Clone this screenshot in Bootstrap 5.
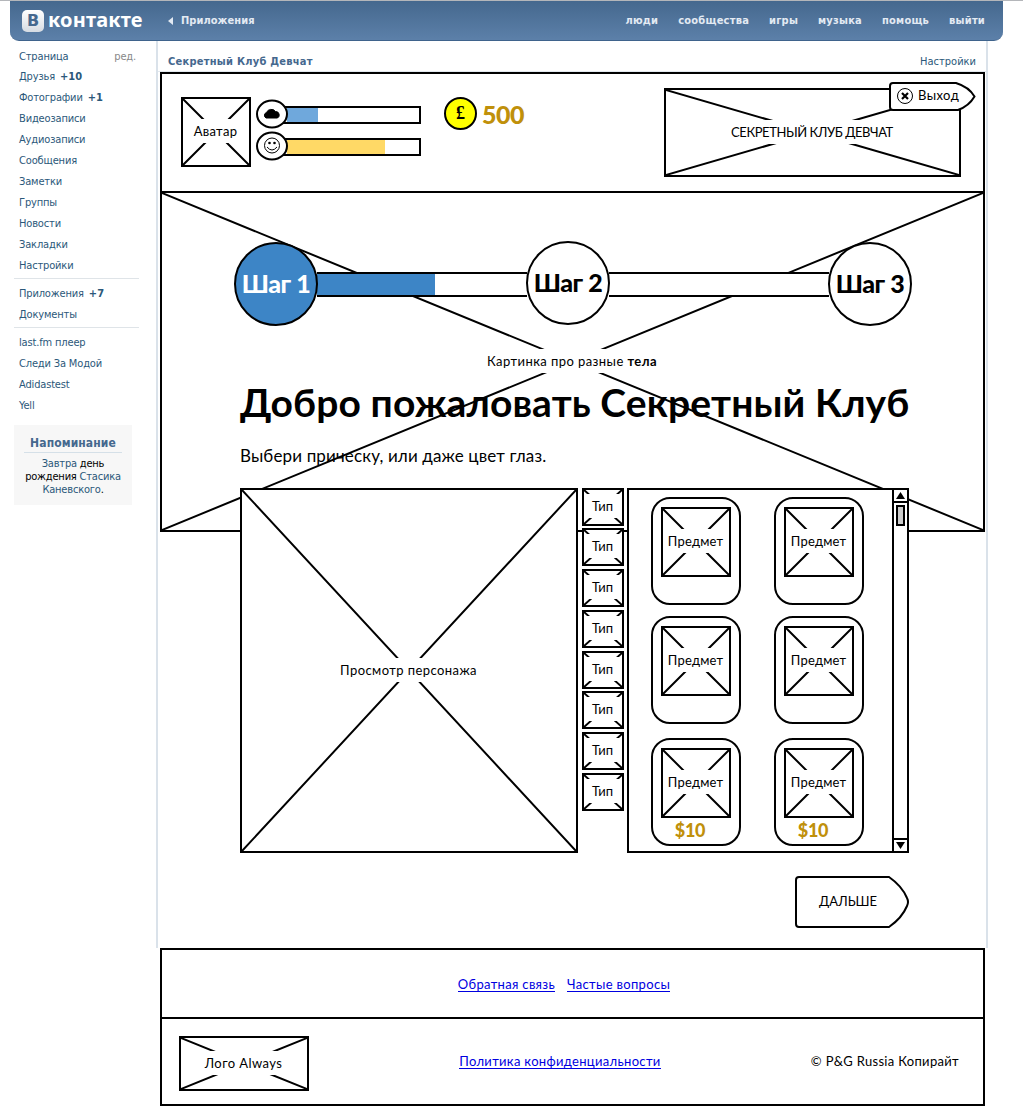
<!DOCTYPE html>
<html lang="ru">
<head>
<meta charset="utf-8">
<title>Секретный Клуб Девчат</title>
<link href="https://cdn.jsdelivr.net/npm/bootstrap@5.3.0/dist/css/bootstrap.min.css" rel="stylesheet">
<style>
body{width:1023px;height:1106px;overflow:hidden;background:#fff;border-top:1px solid #b4b6ba;font-family:"DejaVu Sans Condensed","DejaVu Sans",sans-serif;font-stretch:condensed;font-size:11px;line-height:13px;color:#000}
a{text-decoration:none;color:#2b587a}
.vk-top{height:40px;width:993px;margin-left:10px;padding:0 18px 0 12px;background:linear-gradient(#45688e,#5c80a9);border-bottom:1px solid #3f638c;border-radius:0 0 9px 9px}
.vk-top a{color:#e3eaf3;font-weight:700;letter-spacing:.05px}
.vk-top nav{gap:20px}
.vk-top nav a{letter-spacing:.22px}
.vk-logo{width:22px;height:22px;border-radius:5px;background:linear-gradient(#fff,#d5dbe2);color:#45688e;font:bold 16px/22px "DejaVu Sans",sans-serif;text-align:center}
.vk-word{font:bold 20px/24px "Noto Sans",sans-serif;color:#fff;letter-spacing:.15px;margin-left:4px;width:120px;position:relative;top:-1px}
.vk-side{width:146px;margin-left:10px;padding:5px 17px 0 4px}
.vk-side .item{height:21px;line-height:21px;padding-left:5px;white-space:nowrap;letter-spacing:-.16px;color:#2b587a}
.vk-side .item.own{height:20px;padding-right:3px}
.vk-side .edit{color:#888}
.vk-side .item b{margin-left:2px;letter-spacing:.1px}
.vk-side .rule{height:1px;background:#dfe4e8;margin:2px 0 4px}
.vk-note{width:118px;height:80px;background:#f7f7f7;text-align:center;padding:10px 8px;margin-top:9px;letter-spacing:-.2px}
.vk-note h6{font-size:12px;line-height:17px;font-weight:700;color:#45688e;margin:0 2px 4px;border-bottom:1px solid #d5e0e8;letter-spacing:.1px}
.vk-main{width:832px;height:907px;border:solid #dae2ea;border-width:0 2px}
.app{margin-left:2px;width:825px}
.vk-title{height:31px;padding:10px 10px 0;border-bottom:1px solid #e2e8ee}
.vk-title b{color:#45688e;letter-spacing:.25px}
.wf{font-family:Lato,"Open Sans",sans-serif;font-size:13px;line-height:16px;color:#000;font-stretch:normal}
.ph{position:relative;border:2px solid #000;background:#fff;display:flex;align-items:center;justify-content:center;white-space:nowrap}
.ph>svg{position:absolute;inset:0;width:100%;height:100%}
.ph>span{position:relative;width:100%;background:#fff;height:24px;line-height:24px;margin-top:-2px;text-align:center;padding-right:1px}
.ls-wide{letter-spacing:.43px}
.ls-mid{letter-spacing:.32px}
.ls-tight{letter-spacing:-.43px}
.panel{height:119px;border:2px solid #000;border-bottom:0;position:relative;padding:23px 22px 0 19px}
.avatar{width:70px;height:70px}
.meters{margin-left:5px;padding-top:2px}
.meter{position:relative;height:32px;width:165px;padding:7px 0 0 16px}
.meter .track{height:18px;border:2px solid #000;background:#fff}
.meter .fill{height:14px;margin-left:13px}
.fill.energy{background:#6fa8dc}
.fill.mood{background:#ffd966}
.meter svg{position:absolute;left:0;top:0}
.coin{width:33px;height:33px;margin-left:23px;border:2px solid #000;border-radius:50%;background:#ff0;font:bold 18px/29px "Liberation Serif",serif;text-align:center}
.gold{color:#c0900a;font-weight:900}
.sum{font-size:25px;line-height:35px;margin-left:5px;letter-spacing:-.5px}
.banner{width:297px;height:89px;margin-top:-9px}
.exit{position:absolute;left:727px;top:8px;width:87px;height:29px}
.exit svg,.next svg{position:absolute;inset:0}
.exit span{position:absolute;left:29px;top:5px}
.stage{position:relative;height:757px}
.hero{position:absolute;left:0;top:0;width:825px;height:341px}
.inner{position:relative;padding-left:80px;width:749px}
.steps{margin-left:-6px;width:678px;padding-top:51px;height:135px}
.circ{position:relative;width:84px;height:84px;border:2px solid #000;border-radius:50%;background:#fff;font:900 25px/79px Lato,"Open Sans",sans-serif;letter-spacing:-.4px;text-align:center;white-space:nowrap;flex:none}
.circ.on{background:#3d85c6;color:#fff}
.circ.mid{top:-1px}
.bar{height:25px;border:solid #000;border-width:2px 0;background:#fff;margin:0 -1px}
.bar.b1{width:210px}
.bar.b2{width:220px}
.bar div{height:21px;background:#3d85c6}
.inner h1{font-size:39px;line-height:50px;font-weight:700;letter-spacing:.1px;margin:51px 0 0;white-space:nowrap}
.ask{font-size:17px;line-height:22px;height:22px;margin:18px 0 21px;white-space:nowrap;letter-spacing:.14px}
.preview{width:338px;height:365px}
.types{width:42px;margin:-.3px 0 0 4px;display:grid;grid-auto-rows:38px;row-gap:2.72px;height:323px}
.shop{width:282px;height:365px;border:2px solid #000;background:#fff;margin-left:3px}
.goods{width:213px;margin:7px 0 0 22px;display:grid;grid-template-columns:90px 90px;column-gap:33px;row-gap:11px;align-content:start}
.good{width:90px;height:108px;border:2px solid #000;border-radius:19px;padding:8px}
.good .ph{width:70px;height:70px}
.good .ph span{letter-spacing:.2px}
.good .gold{font-size:18px;line-height:24px;text-align:center;padding-right:12px;letter-spacing:-.3px}
.good.low{margin-top:3px}
.scroll{width:15px;border-left:2px solid #000}
.scroll .b{height:13px;border-bottom:2px solid #000;display:flex;align-items:center;justify-content:center}
.scroll .b.dn{border:0;border-top:2px solid #000}
.thumb{width:9px;height:21px;border:2px solid #000;background:#ccc;margin:2px auto 0}
.next{position:relative;width:114px;height:52px;margin:23px 0 0 555px;line-height:51px;padding-left:24px}
.foot{border:2px solid #000;height:158px}
.foot a{color:#0000e0;border-bottom:1px solid #0000e0;display:inline-block;line-height:14px;white-space:nowrap}
.f1{height:69px;border-bottom:2px solid #000;gap:12px;padding:2px 17px 0 0}
.f2{padding:17px 24px 0 17px}
.f2>a{position:relative;top:-2px}
.f2>span{position:relative;top:-3px}
.logo{width:130px;height:55px}
</style>
<script src="https://cdn.jsdelivr.net/npm/bootstrap@5.3.0/dist/js/bootstrap.bundle.min.js"></script>
</head>
<body>
<header class="vk-top d-flex align-items-center">
  <div class="vk-logo">В</div><div class="vk-word">контакте</div>
  <svg width="5" height="8" class="me-2"><path d="M5 0v8L0 4z" fill="#e3eaf3"/></svg><a href="#">Приложения</a>
  <nav class="ms-auto d-flex"><a href="#">люди</a><a href="#">сообщества</a><a href="#">игры</a><a href="#">музыка</a><a href="#">помощь</a><a href="#">выйти</a></nav>
</header>
<div class="d-flex">
  <aside class="vk-side">
    <div class="item own d-flex justify-content-between"><span>Страница</span><span class="edit">ред.</span></div>
    <div class="item">Друзья <b>+10</b></div><div class="item">Фотографии <b>+1</b></div><div class="item">Видеозаписи</div><div class="item">Аудиозаписи</div><div class="item">Сообщения</div><div class="item">Заметки</div><div class="item">Группы</div><div class="item">Новости</div><div class="item">Закладки</div><div class="item">Настройки</div>
    <div class="rule"></div>
    <div class="item">Приложения <b>+7</b></div><div class="item">Документы</div>
    <div class="rule"></div>
    <div class="item">last.fm плеер</div><div class="item">Следи За Модой</div><div class="item">Adidastest</div><div class="item">Yell</div>
    <div class="vk-note"><h6>Напоминание</h6><a href="#">Завтра</a> день<br>рождения <a href="#">Стасика<br>Каневского</a>.</div>
  </aside>
  <main class="vk-main">
    <div class="vk-title d-flex justify-content-between align-items-center"><b>Секретный Клуб Девчат</b><a href="#">Настройки</a></div>
    <div class="app wf">
      <section class="panel d-flex">
        <div class="ph avatar"><svg viewBox="0 0 66 66"><path d="M0 0L66 66M66 0L0 66" stroke="#000" stroke-width="2"/></svg><span class="ls-mid">Аватар</span></div>
        <div class="meters">
          <div class="meter"><div class="track"><div class="fill energy" style="width:31px"></div></div>
            <svg width="32" height="30"><ellipse cx="16" cy="15" rx="15" ry="13.5" fill="#fff" stroke="#000" stroke-width="2"/><path d="M10 19a3 3 0 0 1 .5-5.500a5 4.500 0 0 1 9-1a3.500 3.500 0 0 1 2 6.500z" stroke="#000"/></svg></div>
          <div class="meter"><div class="track"><div class="fill mood" style="width:98px"></div></div>
            <svg width="32" height="30"><ellipse cx="16" cy="15" rx="15" ry="13.5" fill="#fff" stroke="#000" stroke-width="2"/><g fill="none" stroke="#000"><circle cx="16" cy="14.500" r="7.500"/><path d="M11 16q5 6 10 0"/></g><circle cx="13.500" cy="12" r="1.300"/><circle cx="18.500" cy="12" r="1.300"/></svg></div>
        </div>
        <div class="coin">£</div><div class="gold sum">500</div>
        <div class="ph banner ms-auto"><svg viewBox="0 0 293 85" preserveAspectRatio="none"><path d="M0 0L293 85M293 0L0 85" stroke="#000" stroke-width="2"/></svg><span class="ls-tight">СЕКРЕТНЫЙ КЛУБ ДЕВЧАТ</span></div>
        <div class="exit"><svg width="87" height="29"><path d="M4 1H67Q80 5 85.500 14.500Q80 24 69 28H4Q1 28 1 25V4Q1 1 4 1Z" fill="#fff" stroke="#000" stroke-width="2"/><circle cx="16" cy="14" r="7.500" fill="none" stroke="#000"/><path d="M13 11l6 6m0-6l-6 6" stroke="#000" stroke-width="2.200"/></svg><span class="ls-wide">Выход</span></div>
      </section>
      <section class="stage">
        <div class="hero ph"><svg viewBox="0 0 821 337" preserveAspectRatio="none"><path d="M0 0L821 337M821 0L0 337" stroke="#000" stroke-width="2"/></svg><span class="ls-wide">Картинка про разные <b>тела</b></span></div>
        <div class="inner">
          <div class="steps d-flex align-items-center"><div class="circ on">Шаг 1</div><div class="bar b1"><div style="width:118px"></div></div><div class="circ mid">Шаг 2</div><div class="bar b2"></div><div class="circ">Шаг 3</div></div>
          <h1>Добро пожаловать Секретный Клуб</h1>
          <p class="ask">Выбери прическу, или даже цвет глаз.</p>
          <div class="d-flex">
            <div class="ph preview"><svg viewBox="0 0 334 361" preserveAspectRatio="none"><path d="M0 0L334 361M334 0L0 361" stroke="#000" stroke-width="2"/></svg><span class="ls-wide">Просмотр персонажа</span></div>
            <div class="types" id="types"></div>
            <div class="shop d-flex"><div class="goods" id="goods"></div>
              <div class="scroll ms-auto d-flex flex-column"><div class="b"><svg width="9" height="7"><path d="M0 7L4.500 0L9 7z"/></svg></div><div class="thumb"></div><div class="b dn mt-auto"><svg width="9" height="7"><path d="M0 0L4.500 7L9 0z"/></svg></div></div></div>
          </div>
          <div class="next"><svg width="114" height="52"><path d="M4 1H94Q107 10 112 22Q114 26 112 30Q107 42 94 51H4Q1 51 1 48V4Q1 1 4 1Z" fill="#fff" stroke="#000" stroke-width="2"/></svg><span class="position-relative">ДАЛЬШЕ</span></div>
        </div>
      </section>
      <footer class="foot">
        <div class="f1 d-flex justify-content-center align-items-center"><a class="ls-mid" href="#">Обратная связь</a><a class="ls-mid" href="#">Частые вопросы</a></div>
        <div class="f2 d-flex align-items-center justify-content-between"><div class="ph logo"><svg viewBox="0 0 126 51" preserveAspectRatio="none"><path d="M0 0L126 51M126 0L0 51" stroke="#000" stroke-width="2"/></svg><span class="ls-wide">Лого Always</span></div><a class="ls-mid" href="#">Политика конфиденциальности</a><span class="ls-mid">© P&amp;G Russia Копирайт</span></div>
      </footer>
    </div>
  </main>
</div>
<script>
const box=(t,w,h)=>`<div class="ph"><svg viewBox="0 0 ${w} ${h}" preserveAspectRatio="none"><path d="M0 0L${w} ${h}M${w} 0L0 ${h}" stroke="#000" stroke-width="2"/></svg><span>${t}</span></div>`;
document.getElementById('types').innerHTML=box('Тип',38,34).repeat(8);
document.getElementById('goods').innerHTML=[0,0,0,0,1,1].map(p=>`<div class="good ${p?'low':''}">${box('Предмет',66,66)}${p?'<div class="gold">$10</div>':''}</div>`).join('');
</script>
</body>
</html>
